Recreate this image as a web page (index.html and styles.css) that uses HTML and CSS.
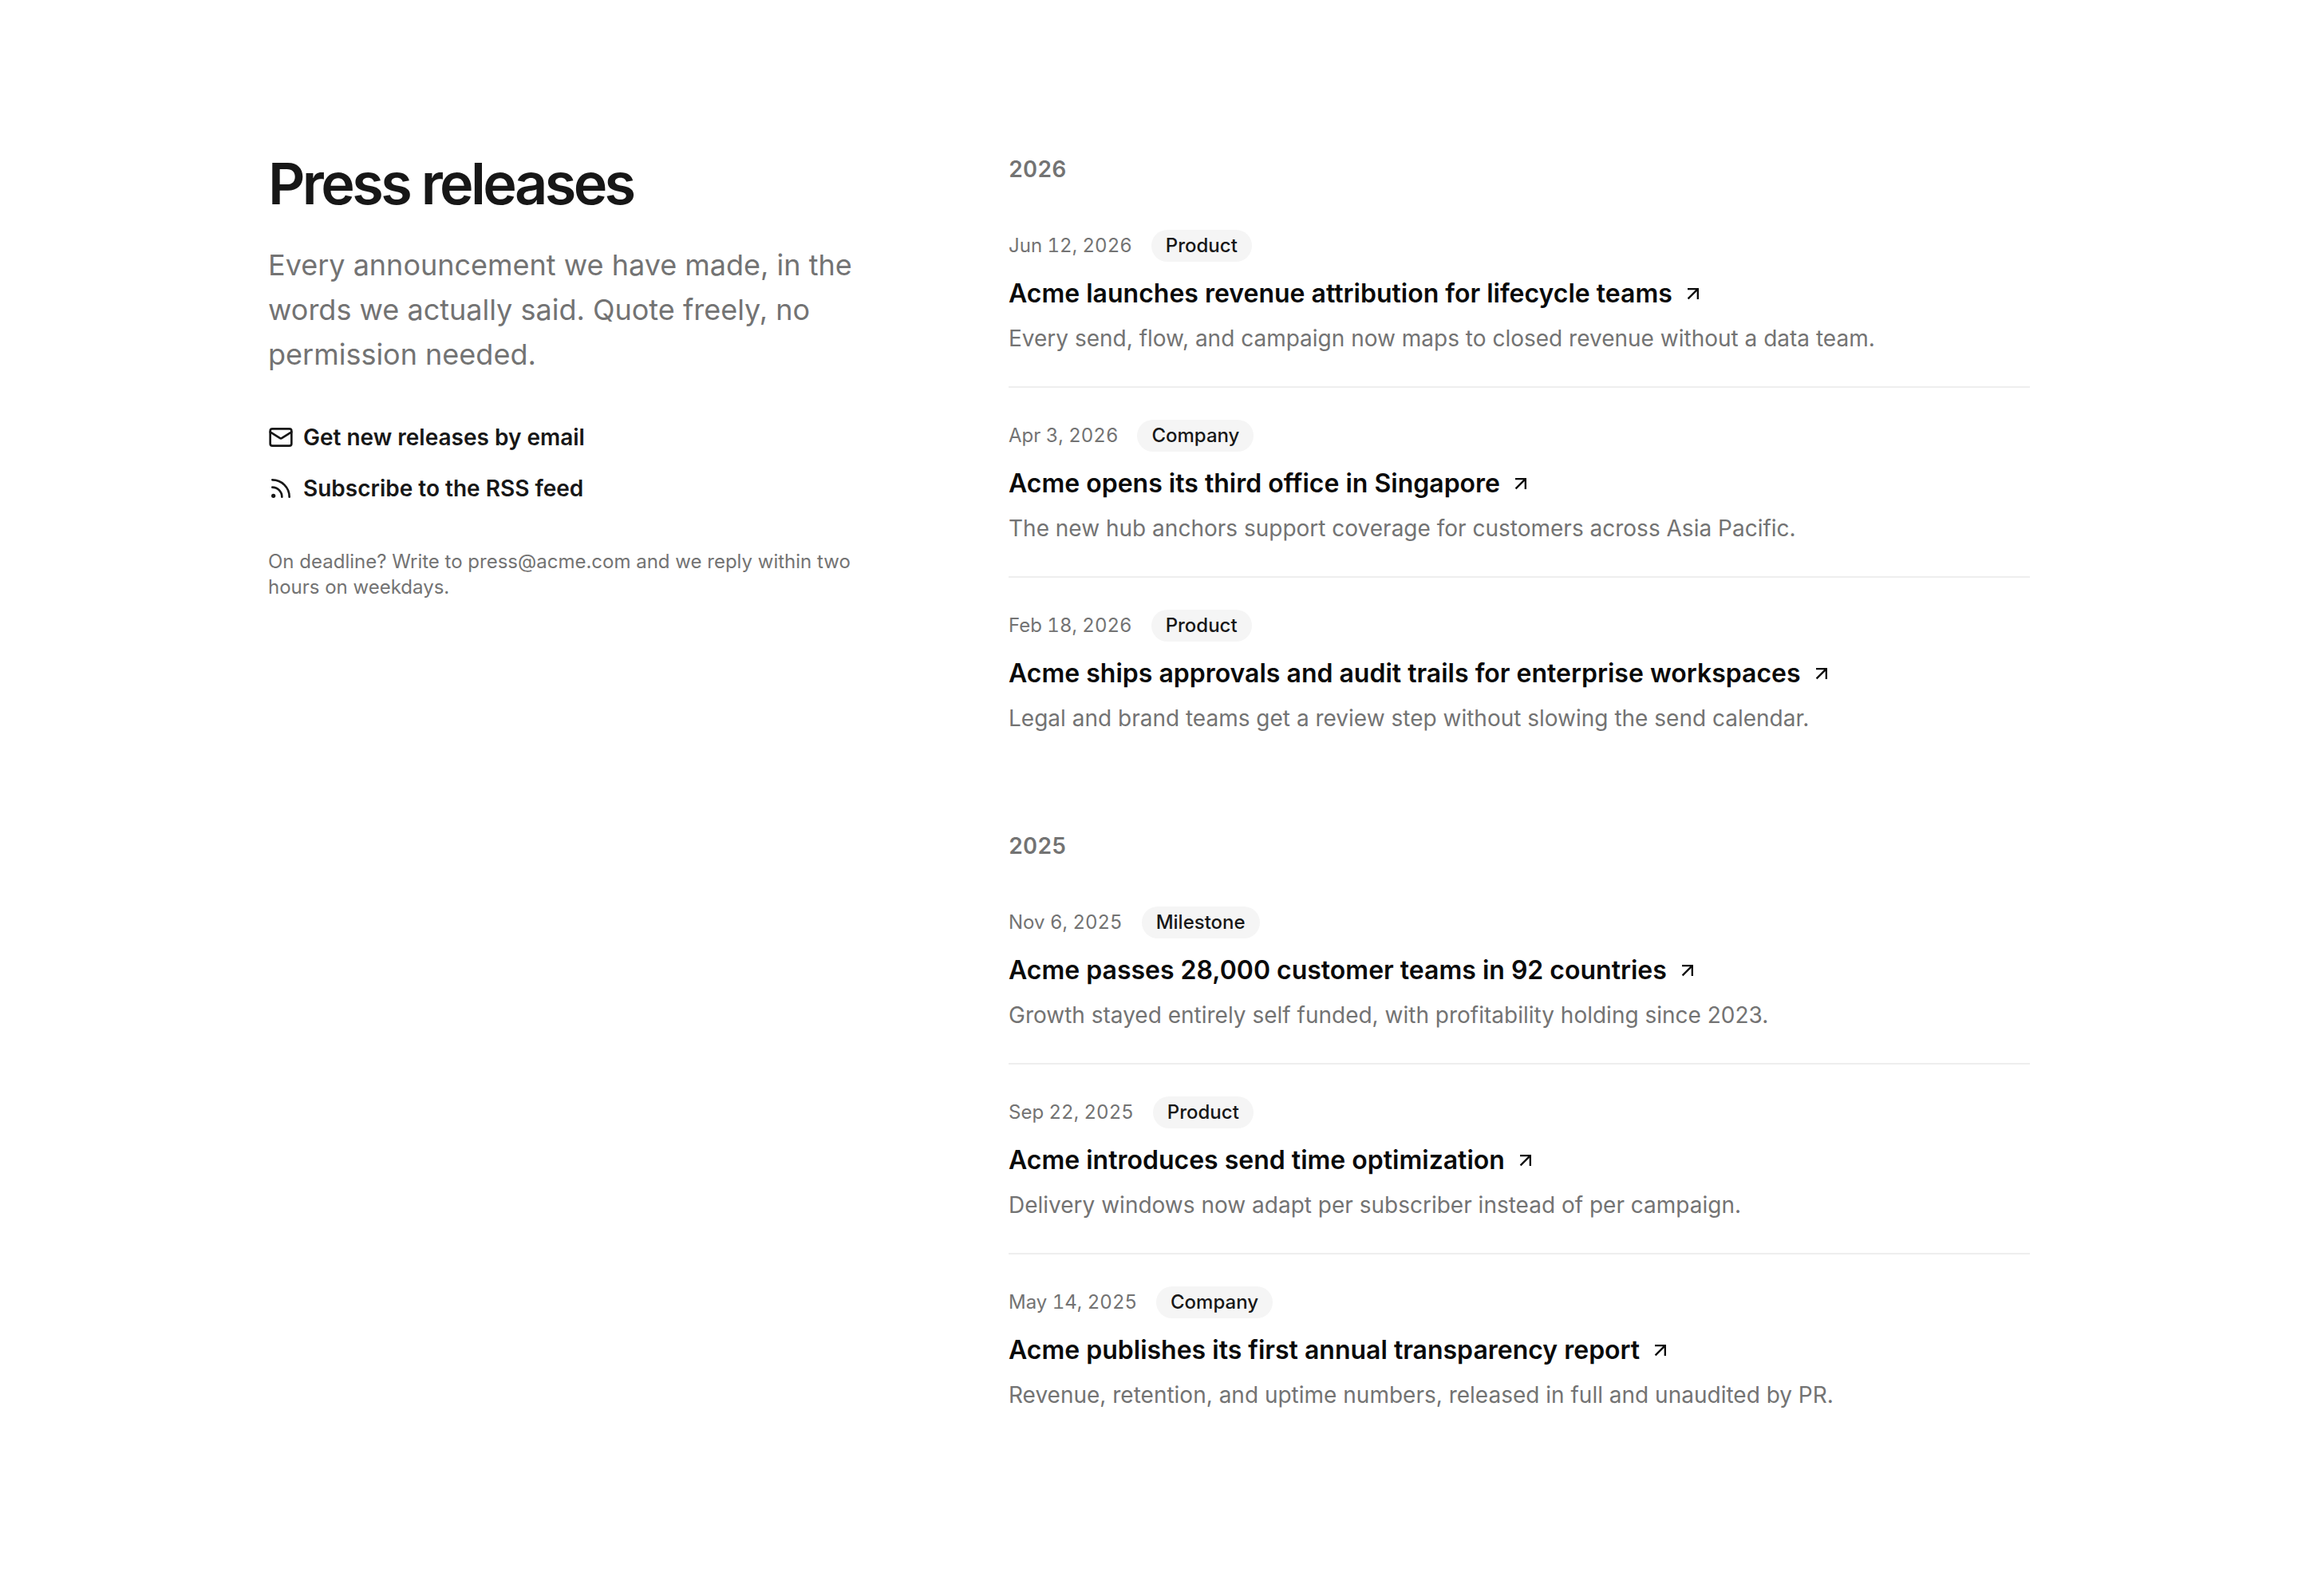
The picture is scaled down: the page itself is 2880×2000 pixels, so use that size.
FILE: index.html
```html
<!DOCTYPE html>
<html lang="en">
<head>
    <meta charset="UTF-8">
    <meta name="viewport" content="width=device-width, initial-scale=1.0">
    <title>Press releases</title>
    <link rel="stylesheet" href="styles.css">
</head>
<body>
    <svg class="sprite" aria-hidden="true">
        <symbol id="arrow" viewBox="0 0 24 24">
            <path d="M6 7h11v11M6.5 17.5 17 7"/>
        </symbol>
    </svg>
    <main class="press">
        <aside class="intro">
            <h1>Press releases</h1>
            <p class="lead">Every announcement we have made, in the words we actually said. Quote freely, no permission needed.</p>
            <ul class="links">
                <li>
                    <a href="#">
                        <svg class="icon" viewBox="0 0 24 24" aria-hidden="true">
                            <rect x="2" y="4" width="20" height="16" rx="2"/>
                            <path d="m22 7-8.97 5.7a1.94 1.94 0 0 1-2.06 0L2 7"/>
                        </svg>
                        Get new releases by email
                    </a>
                </li>
                <li>
                    <a href="#">
                        <svg class="icon" viewBox="0 0 24 24" aria-hidden="true">
                            <path d="M4 11a9 9 0 0 1 9 9"/>
                            <path d="M4 4a16 16 0 0 1 16 16"/>
                            <circle cx="5" cy="19" r="1"/>
                        </svg>
                        Subscribe to the RSS feed
                    </a>
                </li>
            </ul>
            <p class="note">On deadline? Write to press@acme.com and we reply within two hours on weekdays.</p>
        </aside>

        <div class="years">
            <section>
                <h2>2026</h2>
                <article class="release">
                    <div class="meta">
                        <time datetime="2026-06-12">Jun 12, 2026</time>
                        <span class="badge">Product</span>
                    </div>
                    <h3><a href="#">Acme launches revenue attribution for lifecycle teams <svg class="arrow" aria-hidden="true"><use href="#arrow"/></svg></a></h3>
                    <p>Every send, flow, and campaign now maps to closed revenue without a data team.</p>
                </article>
                <article class="release">
                    <div class="meta">
                        <time datetime="2026-04-03">Apr 3, 2026</time>
                        <span class="badge">Company</span>
                    </div>
                    <h3><a href="#">Acme opens its third office in Singapore <svg class="arrow" aria-hidden="true"><use href="#arrow"/></svg></a></h3>
                    <p>The new hub anchors support coverage for customers across Asia Pacific.</p>
                </article>
                <article class="release">
                    <div class="meta">
                        <time datetime="2026-02-18">Feb 18, 2026</time>
                        <span class="badge">Product</span>
                    </div>
                    <h3><a href="#">Acme ships approvals and audit trails for enterprise workspaces <svg class="arrow" aria-hidden="true"><use href="#arrow"/></svg></a></h3>
                    <p>Legal and brand teams get a review step without slowing the send calendar.</p>
                </article>
            </section>

            <section>
                <h2>2025</h2>
                <article class="release">
                    <div class="meta">
                        <time datetime="2025-11-06">Nov 6, 2025</time>
                        <span class="badge">Milestone</span>
                    </div>
                    <h3><a href="#">Acme passes 28,000 customer teams in 92 countries <svg class="arrow" aria-hidden="true"><use href="#arrow"/></svg></a></h3>
                    <p>Growth stayed entirely self funded, with profitability holding since 2023.</p>
                </article>
                <article class="release">
                    <div class="meta">
                        <time datetime="2025-09-22">Sep 22, 2025</time>
                        <span class="badge">Product</span>
                    </div>
                    <h3><a href="#">Acme introduces send time optimization <svg class="arrow" aria-hidden="true"><use href="#arrow"/></svg></a></h3>
                    <p>Delivery windows now adapt per subscriber instead of per campaign.</p>
                </article>
                <article class="release">
                    <div class="meta">
                        <time datetime="2025-05-14">May 14, 2025</time>
                        <span class="badge">Company</span>
                    </div>
                    <h3><a href="#">Acme publishes its first annual transparency report <svg class="arrow" aria-hidden="true"><use href="#arrow"/></svg></a></h3>
                    <p>Revenue, retention, and uptime numbers, released in full and unaudited by PR.</p>
                </article>
            </section>
        </div>
    </main>
</body>
</html>
```

FILE: styles.css
```css
* {
    box-sizing: border-box;
}
body {
    margin: 0;
    background-color: #fff;
    color: #171717;
    font-family: Inter, "Liberation Sans", sans-serif;
    font-size: 28px;
    line-height: 40px;
}
h1, h2, h3, p, ul {
    margin: 0;
    padding: 0;
}
a {
    color: inherit;
    text-decoration: none;
}
a:hover {
    text-decoration: underline;
}
.sprite {
    display: none;
}
.press {
    display: grid;
    grid-template-columns: 5fr 8fr;
    gap: 128px;
    max-width: 2304px;
    margin: 0 auto;
    padding: 192px 48px;
}
.intro {
    max-width: 736px;
}
h1 {
    font-size: 72px;
    line-height: 76px;
    font-weight: 600;
    letter-spacing: -0.05em;
}
.lead {
    margin-top: 36px;
    color: #737373;
    font-size: 36px;
    line-height: 56px;
}
.links {
    display: flex;
    flex-direction: column;
    gap: 24px;
    margin-top: 56px;
    list-style: none;
}
.links a {
    display: flex;
    align-items: center;
    gap: 12px;
    font-weight: 600;
}
.icon, .arrow {
    flex-shrink: 0;
    fill: none;
    stroke: currentColor;
    stroke-width: 2;
}
.icon {
    width: 32px;
    height: 32px;
    stroke-linecap: round;
    stroke-linejoin: round;
}
.arrow {
    width: 28px;
    height: 28px;
}
.note {
    margin-top: 56px;
    color: #737373;
    font-size: 24px;
    line-height: 32px;
}
.years {
    display: flex;
    flex-direction: column;
    gap: 80px;
}
h2 {
    margin-bottom: 16px;
    color: #737373;
    font-size: 28px;
    font-weight: 600;
    font-variant-numeric: tabular-nums;
}
.release {
    padding: 40px 0;
}
.release + .release {
    border-top: 2px solid #eee;
}
.meta {
    display: flex;
    align-items: center;
    gap: 24px;
    font-size: 24px;
}
.meta time {
    color: #737373;
    font-variant-numeric: tabular-nums;
}
.badge {
    padding: 0 18px;
    border-radius: 20px;
    background-color: #f5f5f5;
    font-weight: 500;
}
h3 {
    margin-top: 16px;
    color: #0a0a0a;
    font-size: 32px;
    line-height: 48px;
    font-weight: 600;
}
h3 a {
    display: flex;
    align-items: center;
    gap: 12px;
}
.release p {
    margin-top: 12px;
    color: #737373;
}
```
